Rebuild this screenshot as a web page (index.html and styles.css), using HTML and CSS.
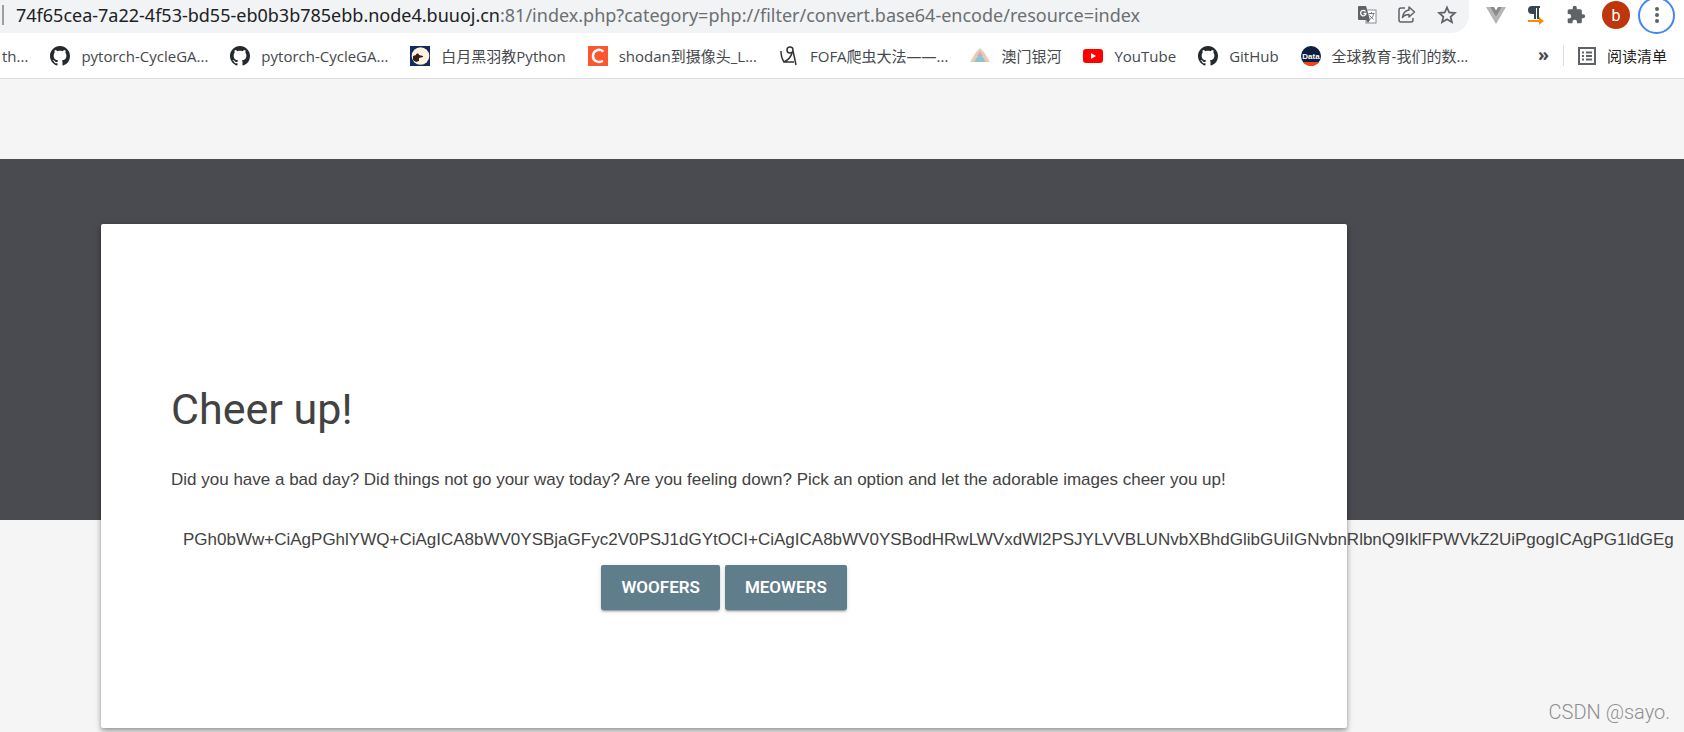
FILE: index.html
```
<!DOCTYPE html>
<html lang="zh-CN">
<head>
    <meta charset="UTF-8">
    <meta name="viewport" content="width=device-width, initial-scale=1.0">
    <title>Cheer up!</title>
    <link rel="stylesheet" href="styles.css">
</head>
<body>
    <svg class="defs" aria-hidden="true">
        <symbol id="github" viewBox="0 0 16 16">
            <path fill="#24292e" d="M8 0C3.58 0 0 3.58 0 8c0 3.54 2.29 6.53 5.47 7.59.4.07.55-.17.55-.38 0-.19-.01-.82-.01-1.49-2.01.37-2.53-.49-2.69-.94-.09-.23-.48-.94-.82-1.13-.28-.15-.68-.52-.01-.53.63-.01 1.08.58 1.23.82.72 1.21 1.87.87 2.33.66.07-.52.28-.87.51-1.07-1.78-.2-3.64-.89-3.64-3.95 0-.87.31-1.59.82-2.15-.08-.2-.36-1.02.08-2.12 0 0 .67-.21 2.2.82.64-.18 1.32-.27 2-.27s1.36.09 2 .27c1.53-1.04 2.2-.82 2.2-.82.44 1.1.16 1.92.08 2.12.51.56.82 1.27.82 2.15 0 3.07-1.87 3.75-3.65 3.95.29.25.54.73.54 1.48 0 1.07-.01 1.93-.01 2.2 0 .21.15.46.55.38A8.01 8.01 0 0 0 16 8c0-4.42-3.58-8-8-8z"/>
        </symbol>
    </svg>

    <header class="browser">
        <div class="toolbar">
            <div class="omnibox">
                <span class="separator"></span>
                <div class="url">74f65cea-7a22-4f53-bd55-eb0b3b785ebb.node4.buuoj.cn<span>:81/index.php?category=php://filter/convert.base64-encode/resource=index</span></div>
                <div class="page-actions">
                    <button type="button" aria-label="Translate">
                        <svg width="20" height="20" viewBox="0 0 20 20">
                            <rect x="9" y="5" width="10" height="13" fill="#fff" stroke="#8a8d91"/>
                            <path fill="#5f6368" d="M2 1h7l4 14H2a1 1 0 0 1-1-1V2a1 1 0 0 1 1-1z"/>
                            <path d="M8.500 6.500A2.700 2.700 0 1 0 9 8.500H6.500" fill="none" stroke="#fff" stroke-width="1.300"/>
                            <path d="M11.500 8.500h6M14.500 7v1.500M12.500 10.500l4 4M16.500 8.500c0 3-2 5-4 6" fill="none" stroke="#777a7e"/>
                            <path d="M9 15h4l-2 3z" fill="#5f6368"/>
                        </svg>
                    </button>
                    <button type="button" aria-label="Share">
                        <svg width="20" height="20" viewBox="0 0 20 20" fill="none" stroke="#5f6368" stroke-width="1.500" stroke-linejoin="round">
                            <path d="M8 3H4a2 2 0 0 0-2 2v10a2 2 0 0 0 2 2h10a2 2 0 0 0 2-2v-2"/>
                            <path d="M12 2l5.500 5-5.500 5V9.500c-3 0-5 .8-6.500 3C6 8.500 8 5.500 12 5z"/>
                        </svg>
                    </button>
                    <button type="button" aria-label="Bookmark">
                        <svg width="20" height="20" viewBox="0 0 20 20" fill="none" stroke="#5f6368" stroke-width="1.800">
                            <path d="M10 2.500l2.200 5 5.600.5-4.200 3.700 1.300 5.500-4.900-2.900-4.900 2.900 1.300-5.500L2.200 8l5.600-.5z"/>
                        </svg>
                    </button>
                </div>
            </div>
            <div class="extensions">
                <button type="button" aria-label="Vue devtools">
                    <svg width="20" height="20" viewBox="0 0 20 20">
                        <path fill="#b5b5b5" d="M0 2h4l6 10 6-10h4L10 19z"/>
                        <path fill="#8a8a8a" d="M4 2h4l2 3.500L12 2h4l-6 10z"/>
                    </svg>
                </button>
                <button type="button" aria-label="Text direction">
                    <svg width="20" height="20" viewBox="0 0 20 20">
                        <path fill="#37474f" d="M6 1h8v2h-1v11h-2V3h-1v11H8V9H6a4 4 0 0 1 0-8z"/>
                        <path fill="#fb8c00" d="M2 15h11v-3l5 4-5 4v-3H2z"/>
                    </svg>
                </button>
                <button type="button" aria-label="Extensions">
                    <svg width="20" height="20" viewBox="0 0 24 24">
                        <path fill="#5f6368" d="M20.500 11H19V7c0-1.100-.9-2-2-2h-4V3.500a2.500 2.500 0 0 0-5 0V5H4c-1.100 0-2 .9-2 2v3.800h1.500a2.700 2.700 0 0 1 0 5.400H2V20c0 1.100.9 2 2 2h3.800v-1.500a2.700 2.700 0 0 1 5.400 0V22H17c1.100 0 2-.9 2-2v-4h1.500a2.500 2.500 0 0 0 0-5z"/>
                    </svg>
                </button>
                <button type="button" class="avatar">b</button>
                <button type="button" class="menu" aria-label="Menu">
                    <svg width="20" height="20" viewBox="0 0 20 20" fill="#5f6368">
                        <circle cx="10" cy="4" r="2"/><circle cx="10" cy="10" r="2"/><circle cx="10" cy="16" r="2"/>
                    </svg>
                </button>
            </div>
        </div>

        <nav class="bookmarks">
            <a href="#">th...</a>
            <a href="#"><svg width="20" height="20"><use href="#github"/></svg>pytorch-CycleGA...</a>
            <a href="#"><svg width="20" height="20"><use href="#github"/></svg>pytorch-CycleGA...</a>
            <a href="#">
                <svg width="20" height="20" viewBox="0 0 20 20">
                    <path fill="#142a5c" d="M0 0h20v20H0z"/>
                    <circle cx="10.500" cy="10" r="8.800" fill="#fbf3dc"/>
                    <path fill="#3a1d1a" d="M3 10l3-1c0-2 3-2 3 0l4 1v1l-4 1v3l-3 1-3-2z"/>
                </svg>白月黑羽教Python</a>
            <a href="#">
                <svg width="20" height="20" viewBox="0 0 20 20">
                    <path fill="#fc5531" d="M0 0h20v20H0z"/>
                    <path d="M15.500 5.500c-5-3.500-10-1-10.500 4s4.500 8 10 5.500" fill="none" stroke="#fff" stroke-width="2.400"/>
                </svg>shodan到摄像头_L...</a>
            <a href="#">
                <svg width="20" height="20" viewBox="0 0 20 20" fill="none" stroke="#333" stroke-width="1.500">
                    <circle cx="11" cy="4" r="3"/>
                    <path d="M2 5c0 4 1 8 3 11 4-2 7-5 8-9M14 5c1 4 2 9 3 14M5 16h10"/>
                </svg>FOFA爬虫大法——...</a>
            <a href="#">
                <svg width="20" height="20" viewBox="0 0 20 20">
                    <path fill="#e6cdb8" d="M10 2l4 4 6 10h-4L10 7l-6 9H0L6 6z"/>
                    <path fill="#8fc3cf" d="M4 16l3-5 3-2 3 2 3 5z"/>
                    <path fill="#d6a6c0" d="M10 5l3 5H7z"/>
                </svg>澳门银河</a>
            <a href="#">
                <svg width="20" height="20" viewBox="0 0 20 20">
                    <rect y="3" width="20" height="14" rx="3" fill="#f00"/>
                    <path fill="#fff" d="M8 7l5 3-5 3z"/>
                </svg>YouTube</a>
            <a href="#"><svg width="20" height="20"><use href="#github"/></svg>GitHub</a>
            <a href="#">
                <svg width="20" height="20" viewBox="0 0 20 20">
                    <circle cx="10" cy="10" r="10" fill="#0b1f3f"/>
                    <path fill="#f4421f" d="M2 16h16a10 10 0 0 1-16 0z"/>
                    <text x="10" y="13" text-anchor="middle" class="data-logo">Data</text>
                </svg>全球教育-我们的数...</a>
            <button type="button" class="more" aria-label="More bookmarks">»</button>
            <a href="#" class="reading-list">
                <svg width="18" height="18" viewBox="0 0 18 18" fill="none" stroke="#5f6368" stroke-width="2">
                    <path d="M1 1h16v16H1zM4 5.500h2M8 5.500h6M4 9h2M8 9h6M4 12.500h2M8 12.500h6"/>
                </svg>阅读清单</a>
        </nav>
    </header>

    <main>
        <div class="ribbon"></div>
        <section class="card">
            <h1>Cheer up!</h1>
            <p>Did you have a bad day? Did things not go your way today? Are you feeling down? Pick an option and let the adorable images cheer you up!</p>
            <div class="output">PGh0bWw+CiAgPGhlYWQ+CiAgICA8bWV0YSBjaGFyc2V0PSJ1dGYtOCI+CiAgICA8bWV0YSBodHRwLWVxdWl2PSJYLVVBLUNvbXBhdGlibGUiIGNvbnRlbnQ9IklFPWVkZ2UiPgogICAgPG1ldGEg</div>
            <form class="options">
                <button type="button">Woofers</button>
                <button type="button">Meowers</button>
            </form>
        </section>
        <div class="watermark">CSDN @sayo.</div>
    </main>
</body>
</html>
```
FILE: styles.css
```
* {
    box-sizing: border-box;
}
body {
    margin: 0;
    min-height: 100vh;
    display: flex;
    flex-direction: column;
    background-color: #f5f5f5;
    color: #424242;
    font-family: "Liberation Sans", Arial, sans-serif;
    overflow: hidden;
}
button {
    border: none;
    padding: 0;
    background: none;
    cursor: pointer;
}
svg {
    display: block;
    flex: none;
}
.defs {
    position: absolute;
    width: 0;
    height: 0;
}

/* browser bar */
.browser {
    background-color: #fff;
    border-bottom: 1px solid #dadce0;
    font-family: "Open Sans", "Noto Sans CJK SC", sans-serif;
}
.toolbar {
    display: flex;
    height: 33px;
}
.omnibox {
    flex: 1;
    display: flex;
    align-items: center;
    min-width: 0;
    padding: 0 12px 3px 2px;
    background-color: #f1f3f4;
    border-radius: 0 0 18px 0;
}
.separator {
    width: 2px;
    height: 20px;
    margin-right: 12px;
    background-color: #9aa0a6;
}
.url {
    flex: 1;
    font-family: "Noto Sans", sans-serif;
    font-size: 18px;
    white-space: nowrap;
    color: #202124;
}
.url span {
    color: #6b6f73;
}
.page-actions {
    display: flex;
    gap: 20px;
}
.extensions {
    display: flex;
    align-items: center;
    gap: 20px;
    padding: 0 9px 3px 17px;
}
.avatar {
    width: 28px;
    height: 28px;
    margin: 0 -12px 0 -4px;
    border-radius: 50%;
    background-color: #bf360c;
    color: #fff;
    font-family: Roboto, sans-serif;
    font-size: 16px;
}
.menu {
    display: grid;
    place-items: center;
    width: 37px;
    height: 37px;
    border: 2px solid #4285f4;
    border-radius: 50%;
}
.bookmarks {
    display: flex;
    align-items: center;
    gap: 22px;
    height: 45px;
    padding: 0 17px 0 2px;
    font-size: 15px;
    white-space: nowrap;
}
.bookmarks a {
    display: flex;
    align-items: center;
    gap: 11px;
    color: #45484c;
    text-decoration: none;
}
.data-logo {
    fill: #fff;
    font: bold 8px "Liberation Sans", sans-serif;
}
.more {
    margin: 0 -8px 4px auto;
    color: #45484c;
    font: bold 18px "Open Sans", sans-serif;
}
.bookmarks .reading-list {
    padding-left: 14px;
    border-left: 1px solid #dadce0;
    color: #202124;
}

/* page */
main {
    flex: 1;
    position: relative;
    padding-top: 80px;
}
.ribbon {
    height: 361px;
    background-color: #4a4b50;
}
.card {
    width: 74%;
    min-height: 504px;
    margin: -296px 0 0 6%;
    padding: 161px 70px 80px;
    background-color: #fff;
    border-radius: 2px;
    box-shadow: 0 4px 5px rgba(0, 0, 0, 0.14), 0 1px 10px rgba(0, 0, 0, 0.12), 0 2px 4px rgba(0, 0, 0, 0.2);
}
.card h1 {
    margin: 0;
    font: 400 43px/48px Roboto, sans-serif;
}
.card p {
    margin: 32px 0 30px;
    font-size: 17px;
    line-height: 30px;
    white-space: nowrap;
}
.output {
    padding-left: 12px;
    font-size: 17px;
    line-height: 30px;
    white-space: nowrap;
}
.options {
    display: flex;
    justify-content: center;
    gap: 5px;
    margin-top: 10px;
}
.options button {
    height: 45px;
    padding: 0 20px;
    border-radius: 2px;
    background-color: #607d8b;
    color: #fff;
    font: 600 17px/45px Roboto, sans-serif;
    text-transform: uppercase;
    box-shadow: 0 2px 2px rgba(0, 0, 0, 0.14), 0 3px 1px -2px rgba(0, 0, 0, 0.2), 0 1px 5px rgba(0, 0, 0, 0.12);
}
.watermark {
    position: absolute;
    right: 14px;
    bottom: 8px;
    color: #8f8f8f;
    font: 300 20px/24px Roboto, sans-serif;
}
```
